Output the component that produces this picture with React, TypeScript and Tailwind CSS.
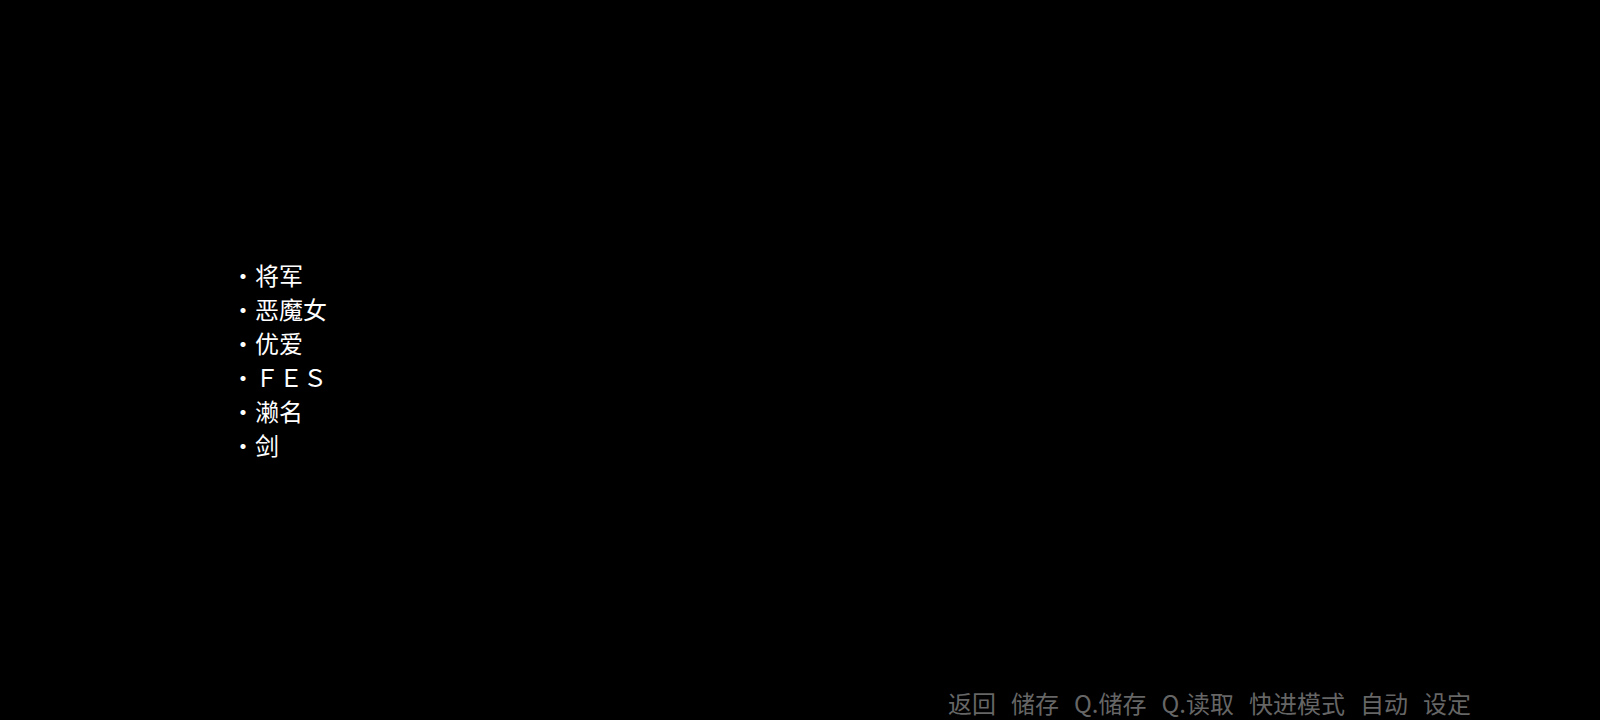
const MENU = ['将军', '恶魔女', '优爱', 'ＦＥＳ', '濑名', '剑']

const BAR = ['返回', '储存', 'Q.储存', 'Q.读取', '快进模式', '自动', '设定']

export default function App() {
  return (
    <div
      className="w-[1600px] h-[720px] bg-black flex flex-col overflow-hidden"
      style={{ fontFamily: '"Noto Sans CJK SC", "Noto Sans", sans-serif' }}
    >
      {/* choice list */}
      <div className="pl-[231px] pt-[258px] flex-1">
        <ul className="flex flex-col text-white text-[24px] leading-[34px]">
          {MENU.map((m) => (
            <li key={m}>・{m}</li>
          ))}
        </ul>
      </div>

      {/* quick menu */}
      <div className="flex justify-end gap-[15px] pr-[129px] pb-[1px] text-[#666666] text-[24px] leading-[32px]">
        {BAR.map((b) => (
          <span key={b}>{b}</span>
        ))}
      </div>
    </div>
  )
}
